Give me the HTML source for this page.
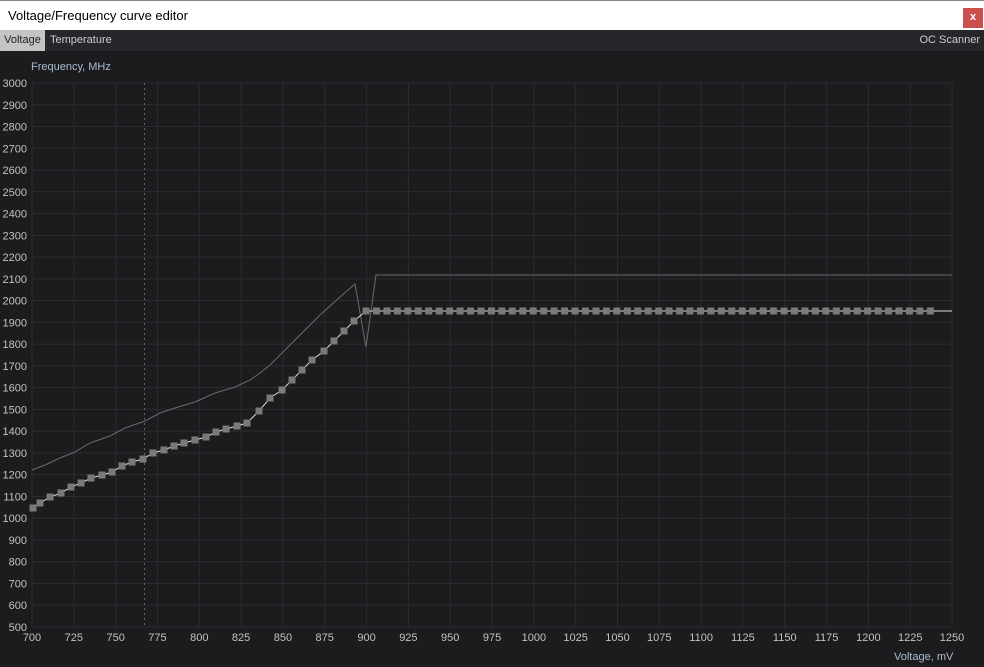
<!DOCTYPE html>
<html><head><meta charset="utf-8"><style>
body{margin:0;width:984px;height:667px;overflow:hidden;background:#1c1c1f;font-family:"Liberation Sans",sans-serif;}
#title{position:absolute;left:0;top:0;width:984px;height:30px;background:#fff;border-top:1px solid #888;box-sizing:border-box;}
#title span{position:absolute;left:8px;top:7px;font-size:13px;color:#000;}
#close{position:absolute;left:963px;top:7px;width:20px;height:20px;background:#c9504f;color:#fff;font-size:11px;font-weight:bold;text-align:center;line-height:19px;}
#tabs{position:absolute;left:0;top:30px;width:984px;height:21px;background:#27272b;font-size:11px;color:#ccc;}
#tabs .a{position:absolute;left:0;top:0;height:21px;width:45px;background:#c4c4c4;color:#222;line-height:21px;text-align:center;}
#tabs .t{position:absolute;left:50px;top:0;line-height:21px;}
#tabs .o{position:absolute;right:4px;top:0;line-height:21px;}
svg{position:absolute;left:0;top:0;}
text{font-family:"Liberation Sans",sans-serif;font-size:11px;fill:#c4c2bd;}
</style></head><body>
<div id="title"><span>Voltage/Frequency curve editor</span><div id="close">x</div></div>
<div id="tabs"><div class="a">Voltage</div><div class="t">Temperature</div><div class="o">OC Scanner</div></div>
<svg id="s" width="984" height="667"></svg>
<script>
var s=document.getElementById('s'),h='';
h+='<text x="31" y="70" style="fill:#a9bdd0">Frequency, MHz</text>';
h+='<text x="894" y="660" style="fill:#a9bdd0">Voltage, mV</text>';
for(var i=0;i<=25;i++){var y=83+i*21.76,v=3000-i*100;
h+='<line x1="32" x2="952" y1="'+y+'" y2="'+y+'" stroke="#2c2c30"/>';
h+='<text x="27" y="'+(y+4)+'" text-anchor="end">'+v+'</text>';}
for(var j=0;j<=22;j++){var x=32+j*41.82;
h+='<line y1="83" y2="627" x1="'+x+'" x2="'+x+'" stroke="#2c2c30"/>';
h+='<text x="'+x+'" y="641" text-anchor="middle">'+(700+j*25)+'</text>';}
h+='<line x1="144.5" x2="144.5" y1="83" y2="627" stroke="#666" stroke-dasharray="2,3"/>';
var up=[[32,470],[45,465],[60,458],[75,452],[90,443],[110,436],[125,428],[145,421],[160,413],[175,408],[195,402],[215,393],[235,387],[250,380],[260,373],[270,365],[300,335],[320,315],[340,297],[355,284],[366,347],[376,275],[952,275]];
h+='<polyline fill="none" stroke="#6a6a6e" stroke-width="1" points="'+up.join(' ')+'"/>';
var m=[[33,508],[40,503],[50,497],[61,493],[71,487],[81,483],[91,478],[102,475],[112,472],[122,466],[132,462],[143,459],[153,453],[164,450],[174,446],[184,443],[195,440],[206,437],[216,432],[226,429],[237,426],[247,423],[259,411],[270,398],[282,390],[292,380],[302,370],[312,360],[324,351],[334,341],[344,331],[354,321],[366,311]];
for(var x=376.5;x<935;x+=10.45)m.push([x,311]);
h+='<polyline fill="none" stroke="#ddd" stroke-width="1" points="'+m.join(' ')+' 952,311"/>';
m.forEach(function(p){h+='<rect x="'+(p[0]-3.5)+'" y="'+(p[1]-3.5)+'" width="7" height="7" fill="#7a7a7a"/>';});
s.innerHTML=h;
</script>
</body></html>
